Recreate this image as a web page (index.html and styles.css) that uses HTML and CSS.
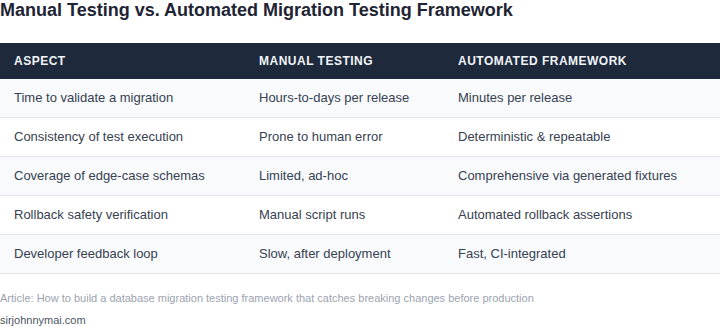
FILE: index.html
```html
<!DOCTYPE html>
<html>
<head>
<meta charset="utf-8">
<link rel="stylesheet" href="styles.css">
</head>
<body>
<div class="page">
  <h1 class="title">Manual Testing vs. Automated Migration Testing Framework</h1>
  <table class="cmp">
    <colgroup>
      <col class="c1"><col class="c2"><col class="c3">
    </colgroup>
    <thead>
      <tr><th>Aspect</th><th>Manual Testing</th><th>Automated Framework</th></tr>
    </thead>
    <tbody>
      <tr><td>Time to validate a migration</td><td>Hours-to-days per release</td><td>Minutes per release</td></tr>
      <tr><td>Consistency of test execution</td><td>Prone to human error</td><td>Deterministic &amp; repeatable</td></tr>
      <tr><td>Coverage of edge-case schemas</td><td>Limited, ad-hoc</td><td>Comprehensive via generated fixtures</td></tr>
      <tr><td>Rollback safety verification</td><td>Manual script runs</td><td>Automated rollback assertions</td></tr>
      <tr><td>Developer feedback loop</td><td>Slow, after deployment</td><td>Fast, CI-integrated</td></tr>
    </tbody>
  </table>
  <p class="source">Article: How to build a database migration testing framework that catches breaking changes before production</p>
  <p class="site">sirjohnnymai.com</p>
</div>
</body>
</html>
```
FILE: styles.css
```css
html, body {
  margin: 0;
  padding: 0;
  background: #ffffff;
}
body {
  font-family: "Liberation Sans", Arial, sans-serif;
}
.page {
  width: 720px;
}
.title {
  margin: 0 0 22px 0;
  font-size: 18px;
  line-height: 21px;
  font-weight: 700;
  color: #1e2433;
}
.cmp {
  width: 720px;
  border-collapse: collapse;
  table-layout: fixed;
}
.c1 { width: 245px; }
.c2 { width: 199px; }
.c3 { width: 276px; }
.cmp th {
  background: #1e293b;
  color: #f1f5f9;
  text-align: left;
  font-size: 12px;
  font-weight: 700;
  letter-spacing: 0.5px;
  text-transform: uppercase;
  line-height: 14px;
  padding: 11px 14px;
}
.cmp td {
  font-size: 13px;
  line-height: 16px;
  color: #374151;
  padding: 11px 14px;
  border-bottom: 1px solid #e5e7eb;
}
.cmp tbody tr:nth-child(odd) td {
  background: #f8fafc;
}
.source {
  margin: 18px 0 0 0;
  font-size: 11px;
  line-height: 13px;
  color: #9ca3af;
}
.site {
  margin: 9px 0 0 0;
  font-size: 11px;
  line-height: 13px;
  color: #4b5563;
}
```
